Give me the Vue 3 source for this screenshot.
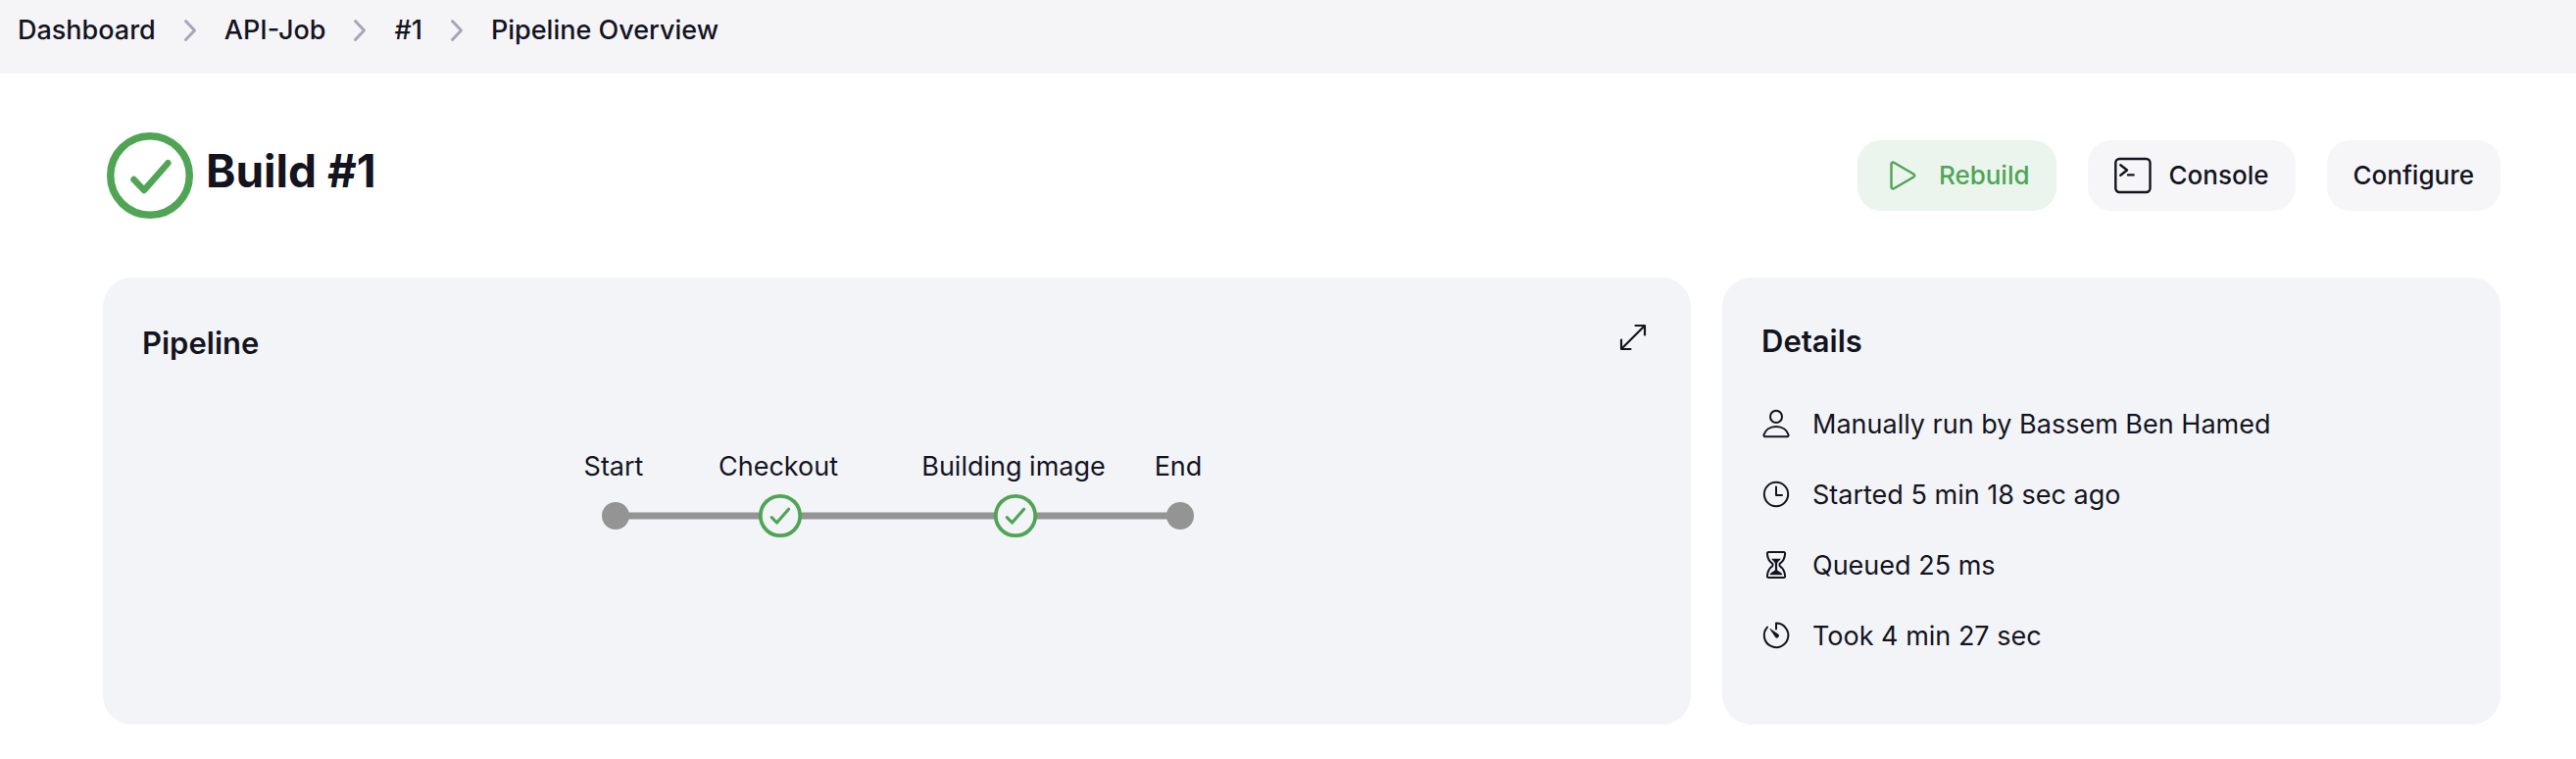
<script setup>
const crumbs = ['Dashboard', 'API-Job', '#1', 'Pipeline Overview']

const details = [
  { icon: 'person', text: 'Manually run by Bassem Ben Hamed' },
  { icon: 'clock', text: 'Started 5 min 18 sec ago' },
  { icon: 'hourglass', text: 'Queued 25 ms' },
  { icon: 'timer', text: 'Took 4 min 27 sec' },
]

const stages = [
  { name: 'Start', x: 53, terminal: true },
  { name: 'Checkout', x: 221 },
  { name: 'Building image', x: 461 },
  { name: 'End', x: 629, terminal: true },
]
</script>

<template>
  <div class="page">
    <nav class="breadcrumbs" aria-label="Breadcrumbs">
      <ol>
        <li v-for="(crumb, i) in crumbs" :key="crumb">
          <svg v-if="i > 0" class="chevron" viewBox="0 0 14 24" aria-hidden="true">
            <path d="M2.5 2.5 11.5 12 2.5 21.5" />
          </svg>
          <a href="#">{{ crumb }}</a>
        </li>
      </ol>
    </nav>

    <main>
      <header class="build-header">
        <svg class="status" viewBox="0 0 96 96" aria-hidden="true">
          <circle cx="48" cy="48" r="40.3" stroke-width="7.5" />
          <path d="M31.5 52 42 63 66.3 35.3" stroke-width="6.5" />
        </svg>
        <h1>Build #1</h1>
        <div class="actions">
          <button type="button" class="action primary">
            <svg viewBox="0 0 38 38" aria-hidden="true">
              <path d="M7.5 7.2v23.6a1.7 1.7 0 0 0 2.6 1.5l20.2-11.8a1.7 1.7 0 0 0 0-3L10.1 5.7a1.7 1.7 0 0 0-2.6 1.5z" stroke-width="2.4" />
            </svg>
            Rebuild
          </button>
          <button type="button" class="action">
            <svg viewBox="0 0 38 38" aria-hidden="true">
              <rect x="1.3" y="2" width="35.2" height="34" rx="4" stroke-width="2.4" />
              <path d="M6.3 8.3 13 13.5 6.3 18.7M14 18.4h5.6" stroke-width="2.4" />
            </svg>
            Console
          </button>
          <button type="button" class="action">Configure</button>
        </div>
      </header>

      <div class="cards">
        <section class="card pipeline" aria-labelledby="pipeline-title">
          <div class="card-header">
            <h2 id="pipeline-title">Pipeline</h2>
            <button type="button" class="expand" aria-label="Expand pipeline">
              <svg viewBox="0 0 38 42" aria-hidden="true">
                <path d="M7.5 32.5 30.5 9.5M21.5 9h9.5v9.5M7 23.5V33h9.5" />
              </svg>
            </button>
          </div>
          <svg class="graph" viewBox="0 0 680 116" width="680" height="116" role="img" aria-label="Pipeline stages">
            <path class="track" d="M53 80H629" />
            <g v-for="stage in stages" :key="stage.name" :transform="`translate(${stage.x} 80)`">
              <text x="-2" y="-41">{{ stage.name }}</text>
              <circle v-if="stage.terminal" class="terminal" r="14" />
              <g v-else class="success">
                <circle r="20.2" />
                <path d="M-8.7 1.6-3.5 7 8.6-6.8" />
              </g>
            </g>
          </svg>
        </section>

        <section class="card" aria-labelledby="details-title">
          <h2 id="details-title">Details</h2>
          <ul class="details">
            <li v-for="item in details" :key="item.text">
              <svg viewBox="0 0 30 30" aria-hidden="true">
                <template v-if="item.icon === 'person'">
                  <ellipse cx="15" cy="7.9" rx="6" ry="6.2" />
                  <path d="M3.6 28.2h22.8a1.3 1.3 0 0 0 1.2-1.6C26.2 21.4 21.2 18 15 18S3.8 21.4 2.4 26.6a1.3 1.3 0 0 0 1.2 1.6z" />
                </template>
                <template v-else-if="item.icon === 'clock'">
                  <circle cx="15" cy="15" r="12.2" />
                  <path d="M15 7.5V16h6" />
                </template>
                <template v-else-if="item.icon === 'hourglass'">
                  <path d="M7.2 2h15.6a1.3 1.3 0 0 1 1.3 1.4C23.8 9 22 11.5 19.2 13.4a2 2 0 0 0 0 3.2C22 18.5 23.8 21 24.1 26.6A1.3 1.3 0 0 1 22.8 28H7.2a1.3 1.3 0 0 1-1.3-1.4C6.2 21 8 18.5 10.8 16.6a2 2 0 0 0 0-3.2C8 11.5 6.2 9 5.9 3.4A1.3 1.3 0 0 1 7.2 2z" />
                  <path class="solid" d="M10.2 8.8h9.6c-.8 1.7-3.2 3-3.7 4.600v6.800c.8 1.400 4.900 2 5.300 5.100H8.600c.4-3.100 4.500-3.700 5.300-5.100v-6.800c-.5-1.600-2.900-2.900-3.700-4.600z" />
                </template>
                <template v-else>
                  <path d="M15 8.600V2.600A12.300 12.300 0 1 1 6 6.600" />
                  <path class="solid" d="M9 8.100 16.900 13.600a2.100 2.100 0 1 1-2.900 2.900L8.500 8.600a.36.36 0 0 1 .5-.5z" />
                </template>
              </svg>
              <span>{{ item.text }}</span>
            </li>
          </ul>
        </section>
      </div>
    </main>
  </div>
</template>

<style>
body {
  margin: 0;
  background: #fff;
}
</style>

<style scoped>
.page {
  color: #14141f;
  font-family: Inter, 'Liberation Sans', sans-serif;
  font-size: 27px;
  line-height: 36px;
}

svg {
  fill: none;
  stroke: currentColor;
  stroke-linecap: round;
  stroke-linejoin: round;
  flex: none;
}

.breadcrumbs {
  background: #f5f5f8;
  padding: 13px 18px 26px;
  font-weight: 500;
}

.breadcrumbs ol,
.breadcrumbs li {
  display: flex;
  align-items: center;
  margin: 0;
  padding: 0;
  list-style: none;
}

.breadcrumbs a {
  color: inherit;
  text-decoration: none;
}

.chevron {
  width: 14px;
  height: 24px;
  margin: 0 28px;
  stroke: #a6a6b8;
  stroke-width: 3;
}

main {
  padding: 56px 77px 35px 105px;
}

.build-header {
  display: flex;
  align-items: center;
  margin-bottom: 56px;
}

.status {
  width: 96px;
  height: 96px;
  color: #4fa554;
}

h1 {
  margin: 0 0 10px 9px;
  font-size: 46px;
  font-weight: 700;
  line-height: 56px;
}

.actions {
  display: flex;
  gap: 32px;
  margin-left: auto;
}

.action {
  display: flex;
  align-items: center;
  gap: 18px;
  height: 72px;
  padding: 0 27px;
  border: 0;
  border-radius: 24px;
  background: #f6f6f9;
  color: inherit;
  font: inherit;
  font-size: 26px;
  font-weight: 500;
}

.action svg {
  width: 38px;
  height: 38px;
}

.primary {
  background: #ebf5ee;
  color: #4fa554;
}

.cards {
  display: grid;
  grid-template-columns: 1620fr 794fr;
  gap: 32px;
}

.card {
  padding: 40px 40px 55px;
  border-radius: 30px;
  background: #f3f4f8;
}

.card-header {
  display: flex;
  align-items: center;
  justify-content: space-between;
  height: 54px;
}

h2 {
  margin: 0;
  font-size: 31px;
  font-weight: 600;
  line-height: 50px;
}

.expand {
  align-self: flex-start;
  width: 38px;
  height: 42px;
  padding: 0;
  border: 0;
  background: none;
  color: inherit;
}

.expand svg {
  display: block;
  width: 38px;
  height: 42px;
  stroke-width: 2.2;
}

.graph {
  display: block;
  max-width: 100%;
  margin: 69px auto 0;
}

.graph text {
  fill: #14141f;
  stroke: none;
  text-anchor: middle;
}

.track {
  stroke: #949494;
  stroke-width: 7;
}

.terminal {
  fill: #949494;
  stroke: none;
}

.success {
  stroke: #4fa554;
  stroke-width: 3.2;
}

.success circle {
  fill: #f3f4f8;
  stroke-width: 3.8;
}

.details {
  margin: 23px 0 0;
  padding: 0;
  list-style: none;
}

.details li {
  display: flex;
  align-items: center;
  gap: 22px;
  min-height: 72px;
}

.details span {
  padding-top: 2px;
}

.details svg {
  width: 30px;
  height: 30px;
  stroke-width: 2;
}

.details .solid {
  fill: currentColor;
  stroke: none;
}
</style>
